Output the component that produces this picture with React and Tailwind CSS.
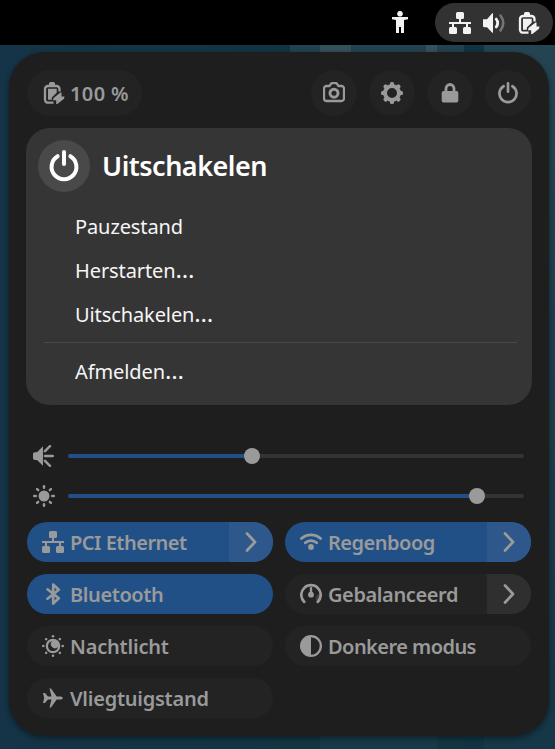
import React from "react";

const Svg = ({ size = 22, box = 22, className = "", children }) => (
  <svg width={size} height={size} viewBox={`0 0 ${box} ${box}`} fill="currentColor" className={`block shrink-0 ${className}`}>
    {children}
  </svg>
);
const line = { fill: "none", stroke: "currentColor", strokeWidth: 2, strokeLinecap: "round", strokeLinejoin: "round" };
const turns = [0, 45, 90, 135, 180, 225, 270, 315];

const Wired = () => (
  <Svg>
    <rect x="7" y="0" width="8" height="7" rx="1.5" />
    <rect x="0" y="15" width="8" height="7" rx="1.5" />
    <rect x="14" y="15" width="8" height="7" rx="1.5" />
    <path d="M10 6h2v4h10v2h-3v4h-2v-4H5v4H3v-4H0v-2h10z" />
  </Svg>
);
const Battery = () => (
  <Svg>
    <path d="M10.500 20.700H5a3 3 0 0 1-3-3V7a3 3 0 0 1 3-3h8.500a3 3 0 0 1 3 3v2.500" {...line} strokeWidth="2.300" strokeLinecap="butt" />
    <path d="M6 3V1.500Q6 0 7.500 0h3Q12 0 12 1.500V3zM5 6.700h8.700v4L8.800 15.500v2.300H5z" />
    <path d="M18.500 10.500v4H21.500L21 16.700 14 22.300h-.8v-4.100H10l.5-2.200 7-5.500z" />
  </Svg>
);
const Power = ({ size = 22 }) => (
  <Svg size={size} box={16}>
    <path d="M8 1v6M4.800 3.100a6.200 6.200 0 1 0 6.400 0" {...line} />
  </Svg>
);
const Camera = () => (
  <Svg>
    <path d="M3.500 4h3L8.500 1.200h5l2 2.800h3A2.500 2.500 0 0 1 21 6.500v10a2.500 2.500 0 0 1-2.500 2.500h-15A2.500 2.500 0 0 1 1 16.500v-10A2.500 2.500 0 0 1 3.500 4z" {...line} strokeWidth="2.300" />
    <circle cx="11" cy="11.200" r="4" {...line} strokeWidth="3" />
  </Svg>
);
const Gear = () => (
  <Svg>
    <circle cx="11" cy="11" r="7" {...line} strokeWidth="4" />
    {turns.map((a) => (
      <rect key={a} x="9" y="0" width="4" height="5" rx="1.500" transform={`rotate(${a} 11 11)`} />
    ))}
  </Svg>
);
const Lock = () => (
  <Svg>
    <path d="M7 10V6.500a4 4 0 0 1 8 0V10" {...line} strokeWidth="2.800" />
    <rect x="2.700" y="9" width="16.600" height="11.500" rx="1.800" />
  </Svg>
);
const Person = () => (
  <Svg>
    <circle cx="11" cy="2.700" r="2.800" />
    <path d="M3 6h16v2.200l-4 .9V22h-3v-6h-2v6H7V9.100l-4-.9z" />
  </Svg>
);
const Speaker = () => (
  <Svg>
    <path d="M0 7.200h4L9 1.500q1-1 1 .5v18q0 1.500-1 .5l-5-5.200H1.500Q0 15.300 0 13.800z" />
    <path d="M13.200 7q3 4 0 8" {...line} strokeWidth="2.800" />
    <path d="M17.500 3.500q5.500 7.500 0 15" {...line} strokeWidth="2.600" opacity=".35" />
  </Svg>
);
const Loud = () => (
  <Svg>
    <path d="M0 9q0-1.800 1.800-1.800H4L10 1.200v19.600L4 15H1.800Q0 15 0 13z" />
    <path d="M12 11h7.800M12 6.200l5-5M12 15.800l5 5" {...line} strokeWidth="2.500" />
  </Svg>
);
const Sun = () => (
  <Svg>
    <circle cx="11" cy="11" r="5.500" />
    {turns.map((a) => (
      <rect key={a} x="9.800" y="0" width="2.400" height="4" rx="1.200" transform={`rotate(${a} 11 11)`} />
    ))}
  </Svg>
);
const Night = () => (
  <Svg>
    <path
      fillRule="evenodd"
      d="M11 3.700a7.300 7.300 0 1 0 0 14.600a7.300 7.300 0 1 0 0-14.600zM10 6.300a4.900 4.900 0 1 0 5.800 5.700a3.600 3.600 0 0 1-5.800-5.700z"
    />
    {turns.map((a) => (
      <circle key={a} cx="11" cy="1.300" r="1.300" transform={`rotate(${a} 11 11)`} />
    ))}
  </Svg>
);
const Bluetooth = () => (
  <Svg>
    <path d="M5.500 6.300L16.800 15.300 11.200 20.500V1.500L16.800 6.700 5.500 15.700" {...line} strokeWidth="2.600" />
  </Svg>
);
const Plane = () => (
  <Svg>
    <path d="M1 6h2l3 3.500h3.500L7.500 1.500H9l5.700 8H19q1.800.5 1.800 1.500T19 12.500h-4.300L9 20.500H7.500l2-8H6L3 16H1l1.200-5z" />
  </Svg>
);
const Wifi = () => (
  <Svg>
    <path d="M1.400 7.600a14 14 0 0 1 19.200 0M5.300 11.800a8.300 8.300 0 0 1 11.400 0" {...line} strokeWidth="2.700" />
    <circle cx="11" cy="16" r="2.900" />
  </Svg>
);
const Gauge = () => (
  <Svg>
    <path d="M4.300 18.900a9.700 9.700 0 1 1 13.400 0" {...line} strokeWidth="2.700" />
    <path d="M15.600 15.800l2.200 3.200 3-5-1.100-3-3 1z" opacity=".25" />
    <rect x="9.800" y="4" width="2.400" height="8" rx="1" />
    <circle cx="11" cy="11.700" r="2.900" />
  </Svg>
);
const Contrast = () => (
  <Svg>
    <circle cx="11" cy="11" r="9.850" {...line} strokeWidth="2.300" />
    <path d="M11 1a10 10 0 0 0 0 20z" />
  </Svg>
);
const Chevron = () => (
  <Svg>
    <path d="M7 2.500l8 8.500-8 8.500" {...line} strokeWidth="2.700" />
  </Svg>
);

const Round = ({ children }) => (
  <div className="flex h-[46px] w-[46px] items-center justify-center rounded-full bg-[#232323]">{children}</div>
);

const Tile = ({ icon, label, tracking, on, arrow }) => (
  <div className={`flex h-10 overflow-hidden rounded-full ${on ? "bg-[#215087]" : "bg-[#232323]"}`}>
    <div className="flex flex-1 items-center gap-1.5 pl-[15px]">
      {icon}
      <span className={`h-10 text-[20px] leading-[42px] font-semibold whitespace-nowrap ${tracking}`}>{label}</span>
    </div>
    {arrow && (
      <div className={`flex w-11 items-center justify-center ${on ? "bg-[#2e588b]" : "bg-[#2f2f2f]"}`}>
        <Chevron />
      </div>
    )}
  </div>
);

const Slider = ({ icon, fill }) => (
  <div className="flex h-10 items-center gap-[13px] pr-[7px] pl-[6px]">
    {icon}
    <div className="flex h-4 flex-1 items-center">
      <div className={`h-1 rounded-l-full bg-[#215087] ${fill}`} />
      <div className="z-10 -mx-2 h-4 w-4 shrink-0 rounded-full bg-[#9a9a9a]" />
      <div className="h-1 flex-1 rounded-r-full bg-[#343434]" />
    </div>
  </div>
);

const MenuItem = ({ label, more }) => (
  <div className="h-11 pl-[49px] text-[20px] leading-[44px] tracking-[-0.1px]">
    {label}
    {more && <span className="text-[24px] leading-none">…</span>}
  </div>
);

export default function App() {
  return (
    <div className="relative flex h-[749px] w-[555px] flex-col overflow-hidden bg-[#143543] font-['Noto_Sans',sans-serif] text-[#9a9a9a]">
      <div className="absolute inset-0 flex">
        <div className="w-[290px] bg-linear-to-r from-[#153447] to-[#123542]" />
        <div className="w-[30px] bg-linear-to-b from-[#244350] to-[#123542]" />
        <div className="w-[31px] bg-linear-to-b from-[#365460] to-[#173a48]" />
        <div className="w-[75px] bg-linear-to-b from-[#244350] to-[#173a48]" />
        <div className="w-[11px] bg-linear-to-b from-[#365460] to-[#173a48]" />
        <div className="w-[27px] bg-linear-to-b from-[#244350] to-[#123542]" />
        <div className="w-[20px] bg-[#103442]" />
        <div className="flex-1 bg-linear-to-b from-[#264553] to-[#163747]" />
      </div>
      <header className="relative flex h-[45px] shrink-0 items-start justify-end bg-black pr-0.5 text-[#f2f2f2]">
        <div className="mt-[11px] mr-6"><Person /></div>
        <div className="mt-[3px] flex h-[39px] w-[118px] items-center gap-3 rounded-full bg-[#323232] pl-[14px]">
          <Wired />
          <Speaker />
          <div className="ml-px"><Battery /></div>
        </div>
      </header>

      <main className="relative mt-[7px] ml-[9px] flex h-[684px] w-[540px] flex-col rounded-[36px] bg-[#1e1e1e] px-[18px] pt-[18px] shadow-[0_2px_5px_1px_rgba(0,0,0,0.35)]">
        <div className="flex gap-3">
          <div className="mr-auto flex h-[46px] w-[115px] items-center gap-[5px] rounded-full bg-[#232323] pl-[16px]">
            <Battery />
            <span className="h-[46px] text-[20px] leading-[48px] font-semibold tracking-[0.4px] whitespace-nowrap">100 %</span>
          </div>
          <Round><Camera /></Round>
          <Round><Gear /></Round>
          <Round><Lock /></Round>
          <Round><Power /></Round>
        </div>

        <section className="-mx-px mt-3 h-[277px] rounded-3xl bg-[#353535] text-white">
          <div className="flex items-center gap-3 pt-3 pl-3">
            <div className="flex h-[52px] w-[52px] items-center justify-center rounded-full bg-[#494949]"><Power size={32} /></div>
            <span className="h-[52px] text-[27px] leading-[51px] font-semibold tracking-[-0.5px]">Uitschakelen</span>
          </div>
          <div className="mt-[13px] text-[#f6f6f6]">
            <MenuItem label="Pauzestand" />
            <MenuItem label="Herstarten" more />
            <MenuItem label="Uitschakelen" more />
            <div className="mx-[18px] mt-[5px] mb-[7px] h-px w-[473px] bg-[#494949]" />
            <MenuItem label="Afmelden" more />
          </div>
        </section>

        <div className="mt-[31px]">
          <Slider icon={<Loud />} fill="w-[184px]" />
          <Slider icon={<Sun />} fill="w-[409px]" />
        </div>

        <div className="mt-[6px] grid grid-cols-2 gap-3">
          <Tile on arrow icon={<Wired />} label="PCI Ethernet" tracking="tracking-[-0.5px]" />
          <Tile on arrow icon={<Wifi />} label="Regenboog" tracking="tracking-[-0.5px]" />
          <Tile on icon={<Bluetooth />} label="Bluetooth" tracking="tracking-[-0.4px]" />
          <Tile arrow icon={<Gauge />} label="Gebalanceerd" tracking="tracking-[-0.4px]" />
          <Tile icon={<Night />} label="Nachtlicht" tracking="tracking-[-0.2px]" />
          <Tile icon={<Contrast />} label="Donkere modus" tracking="tracking-[-0.55px]" />
          <Tile icon={<Plane />} label="Vliegtuigstand" tracking="tracking-[-0.25px]" />
        </div>
      </main>
    </div>
  );
}
